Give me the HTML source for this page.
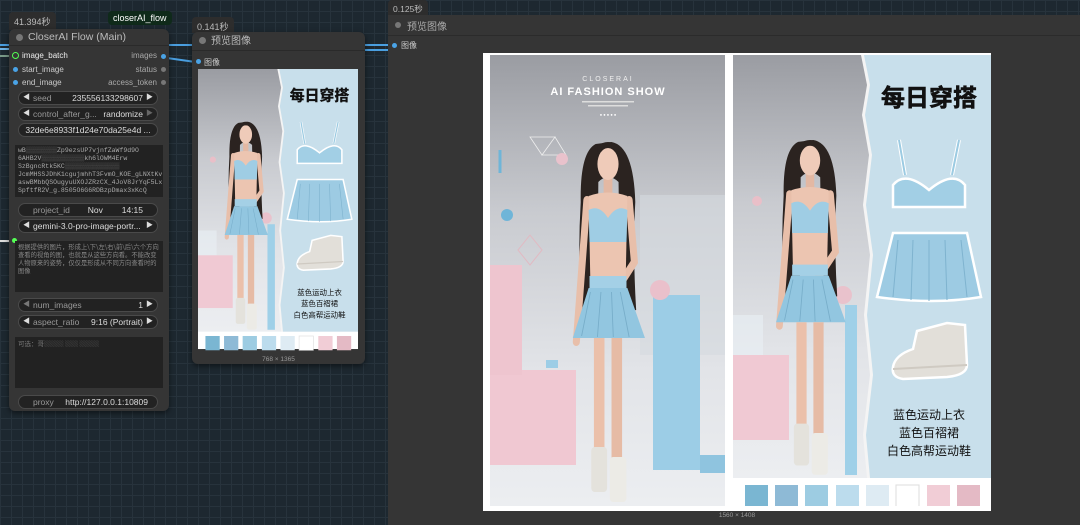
<!DOCTYPE html>
<html><head><meta charset="utf-8">
<style>
*{margin:0;padding:0;box-sizing:border-box}
body{width:1080px;height:525px;overflow:hidden;position:relative;font-family:"Liberation Sans","Noto Sans CJK SC",sans-serif;
background-color:#1d2830;
background-image:linear-gradient(#27333c 1px,transparent 1px),linear-gradient(90deg,#27333c 1px,transparent 1px);
background-size:11px 11px}
.abs{position:absolute}
.lbl{position:absolute;background:#2d2d2d;color:#bbb;font-size:9px;padding:3px 5px;border-radius:4px 4px 0 0}
.node{position:absolute;background:#353535;border-radius:6px;box-shadow:0 2px 6px rgba(0,0,0,.5)}
.tbar{height:17px;border-bottom:1px solid #2a2a2a;color:#bbb;font-size:10px;line-height:17px;padding-left:19px;position:relative}
.tbar:before{content:"";position:absolute;left:7px;top:5px;width:7px;height:7px;border-radius:50%;background:#777}
.row{position:absolute;font-size:8px;color:#ccc}
.dot{position:absolute;width:5px;height:5px;border-radius:50%;background:#4aa3e6}
.w{position:absolute;left:18px;width:140px;height:14px;background:#222;border:1px solid #4a4a4a;border-radius:7px;font-size:8.5px;color:#ddd;line-height:12px;white-space:nowrap;overflow:hidden}
.w .k{position:absolute;left:14px;color:#999}
.w .v{position:absolute;right:14px}
.w .al{position:absolute;left:4px;color:#ddd;font-size:7px}
.w .ar{position:absolute;right:4px;color:#ddd;font-size:7px}
.ta{position:absolute;left:15px;width:148px;background:#222;font-size:6.5px;color:#888;line-height:8px;padding:2px 3px;font-family:"Liberation Mono","Noto Sans CJK SC",monospace;overflow:hidden}
.wire{position:absolute;height:2px;background:#4a9fe0}
</style></head><body>

<div class="wire" style="left:0;top:44px;width:10px"></div>
<div class="wire" style="left:0;top:48px;width:10px;background:#6fb5e8"></div>
<div class="wire" style="left:167px;top:44px;width:26px"></div>
<div class="wire" style="left:167px;top:57px;width:26px;transform:rotate(8deg);transform-origin:left"></div>
<div class="wire" style="left:364px;top:44px;width:25px"></div>
<div class="wire" style="left:364px;top:49px;width:25px"></div>
<div class="abs" style="left:0;top:240px;width:14px;height:2px;background:#ddd"></div>
<div class="abs" style="left:0;top:55px;width:10px;height:2px;background:#7a9a88"></div>

<div class="lbl" style="left:9px;top:12px;height:18px">41.394秒</div>
<div class="abs" style="left:108px;top:11px;background:#0f2a1a;color:#fff;font-size:9px;padding:2px 5px;border-radius:4px">closerAI_flow</div>
<div class="node" style="left:9px;top:29px;width:160px;height:382px">
  <div class="tbar" style="font-size:10.5px">CloserAI Flow (Main)</div>
  <div class="abs" style="left:3px;top:23px;width:7px;height:7px;border:1.5px solid #5f5;border-radius:50%"></div>
  <div class="row" style="left:13px;top:22px;color:#eee">image_batch</div>
  <div class="dot" style="left:4px;top:38px"></div><div class="row" style="left:13px;top:36px">start_image</div>
  <div class="dot" style="left:4px;top:51px"></div><div class="row" style="left:13px;top:49px">end_image</div>
  <div class="row" style="right:12px;top:22px;color:#aaa">images</div><div class="dot" style="right:3px;top:25px"></div>
  <div class="row" style="right:12px;top:36px;color:#aaa">status</div><div class="dot" style="right:3px;top:38px;background:#777"></div>
  <div class="row" style="right:12px;top:49px;color:#aaa">access_token</div><div class="dot" style="right:3px;top:51px;background:#777"></div>
</div>
<div class="w" style="top:91px"><span class="al">◀</span><span class="k">seed</span><span class="v">235556133298607</span><span class="ar">▶</span></div>
<div class="w" style="top:107px"><span class="al">◀</span><span class="k">control_after_g...</span><span class="v">randomize</span><span class="ar" style="color:#666">▶</span></div>
<div class="w" style="top:123px;text-align:center">32de6e8933f1d24e70da25e4d ...</div>
<div class="ta" style="top:145px;height:52px;color:#aaa">wB<span style="color:#666">▒▒▒▒▒▒▒▒</span>Zp9ezsUP7vjnfZaWf9d9O<br>6AHB2V<span style="color:#666">▒▒▒▒▒▒▒▒▒▒▒</span>kh6lOWM4Erw<br>SzBgncRtk5KC<span style="color:#666">▒▒▒▒▒▒▒▒▒▒▒▒▒▒</span><br>JcmMHSSJDhK1cgujmhhT3FvmO_KOE_gLNXtKv<br>aswBMbbQSOugyuUXOJZRzCX_4JoV8JrYqF5Lx<br>SpftfR2V_g.8505O6G6RDBzpDmax3xKcQ</div>
<div class="w" style="top:203px"><span class="k">project_id</span><span class="v">Nov &nbsp;&nbsp;&nbsp;&nbsp;&nbsp;&nbsp;&nbsp;14:15</span></div>
<div class="w" style="top:219px"><span class="al">◀</span><span class="k" style="color:#ddd">gemini-3.0-pro-image-portr...</span><span class="ar">▶</span></div>
<div class="abs" style="left:12px;top:238px;width:5px;height:5px;border-radius:50%;background:#5f5"></div>
<div class="ta" style="top:241px;height:51px;font-family:'Noto Sans CJK SC',sans-serif;font-size:6.3px">根据提供的图片，形成上\下\左\右\前\后\六个方向查看的视角的图，也就是从这些方向看。不能改变人物原来的姿势，仅仅是形成从不同方向查看时的图像</div>
<div class="w" style="top:298px"><span class="al" style="color:#777">◀</span><span class="k">num_images</span><span class="v">1</span><span class="ar">▶</span></div>
<div class="w" style="top:315px"><span class="al">◀</span><span class="k">aspect_ratio</span><span class="v">9:16 (Portrait)</span><span class="ar">▶</span></div>
<div class="ta" style="top:337px;height:51px;font-family:'Noto Sans CJK SC',sans-serif;color:#777">可选：哥<span style="color:#555">▒▒▒ ▒▒ ▒▒▒</span></div>
<div class="w" style="top:395px"><span class="k">proxy</span><span class="v" style="right:9px">http://127.0.0.1:10809</span></div>

<svg width="0" height="0" style="position:absolute">
<defs>
<linearGradient id="bgL" x1="0" y1="0" x2="0" y2="1">
  <stop offset="0" stop-color="#9a9ca2"/><stop offset=".35" stop-color="#c9cbd0"/><stop offset=".7" stop-color="#e2e4e8"/><stop offset="1" stop-color="#eceef1"/>
</linearGradient>
<g id="fig">
  <path d="M-14 2 Q-32 10 -31 60 Q-35 120 -29 175 L-12 172 L-11 40 Q0 30 12 40 L14 172 L32 168 Q28 110 31 60 Q29 4 4 0 Z" fill="#2b2320"/>
  <path d="M-24 58 L-36 200" stroke="#e8bfaa" stroke-width="8" stroke-linecap="round"/>
  <path d="M24 58 L30 120 L8 150" stroke="#e8bfaa" stroke-width="8" stroke-linecap="round" fill="none"/>
  <rect x="-5" y="33" width="10" height="18" fill="#e3b8a3"/>
  <path d="M-22 54 Q0 47 22 54 L20 142 L-20 142 Z" fill="#ecc5b1"/>
  <ellipse cx="0" cy="22" rx="12" ry="16" fill="#efcbb9"/>
  <path d="M-12 10 Q0 2 12 10 L12 4 Q0 -4 -12 4Z" fill="#2b2320"/>
  <path d="M-22 68 Q-10 62 0 76 Q10 62 22 68 L21 100 L-21 100 Z" fill="#9fcde4"/>
  <rect x="-21" y="134" width="42" height="12" fill="#a4d0e6"/>
  <path d="M-22 146 L22 146 L42 196 L-40 196 Z" fill="#92c6e0"/>
  <path d="M-20 150 L-30 194 M-8 150 L-12 195 M4 150 L6 195 M14 150 L24 195" stroke="#77adc9" stroke-width="1"/>
  <rect x="-16" y="196" width="12" height="120" fill="#ebc0aa"/>
  <rect x="4" y="196" width="12" height="128" fill="#e6bba5"/>
  <rect x="-19" y="305" width="18" height="45" rx="4" fill="#e4e2dc"/>
  <rect x="2" y="315" width="19" height="45" rx="4" fill="#ecebe6"/>
</g>
<g id="card">
  <rect width="258" height="451" fill="#fff"/>
  <rect x="0" y="0" width="258" height="423" fill="url(#bgL)"/>
  <rect x="0" y="260" width="30" height="60" fill="#e9f0f5" opacity=".6"/>
  <rect x="0" y="300" width="56" height="85" fill="#f0c9d3"/>
  <rect x="112" y="250" width="12" height="170" fill="#9fd0e8"/>
  <circle cx="110" cy="240" r="9" fill="#e9c2cc"/>
  <circle cx="24" cy="146" r="5" fill="#e9bfc8"/>
  <use href="#fig" transform="translate(77 85) scale(0.85 0.93)"/>
  <path d="M128 0 L134 30 L129 60 L136 100 L130 150 L137 200 L131 260 L137 320 L130 380 L134 423 L258 423 L258 0 Z" fill="#f4f4f4"/>
  <path d="M131 0 L137 30 L132 60 L139 100 L133 150 L140 200 L134 260 L140 320 L133 380 L137 423 L258 423 L258 0 Z" fill="#c8dfeb"/>
  <text x="196" y="51" font-size="24" font-weight="bold" text-anchor="middle" fill="#111" stroke="#111" stroke-width="0.6" font-family="Noto Sans CJK SC,sans-serif">每日穿搭</text>
  <path d="M166 85 L172 120 M226 85 L219 120" stroke="#fff" stroke-width="4"/>
  <path d="M166 85 L172 120 M226 85 L219 120" stroke="#9ccbe2" stroke-width="2"/>
  <path d="M160 130 Q172 115 196 135 Q220 115 232 130 L232 152 L160 152 Z" fill="#a2cfe5" stroke="#fff" stroke-width="2.5"/>
  <path d="M160 178 L234 178 L248 242 Q200 250 144 242 Z" fill="#9dcbe3" stroke="#fff" stroke-width="2.5"/>
  <path d="M165 185 L160 242 M180 185 L178 245 M196 185 L196 246 M212 185 L214 245 M228 185 L234 242" stroke="#7fb3cf" stroke-width="1"/>
  <path d="M184 276 L214 268 L232 270 L234 310 Q234 320 214 322 L170 324 Q158 322 160 312 Q162 300 180 294 Z" fill="#e2dfd9" stroke="#fff" stroke-width="2.5"/>
  <path d="M160 314 L234 310" stroke="#cfcac2" stroke-width="2"/>
  <text x="196" y="364" font-size="12" text-anchor="middle" fill="#111" font-family="Noto Sans CJK SC,sans-serif">蓝色运动上衣</text>
  <text x="196" y="382" font-size="12" text-anchor="middle" fill="#111" font-family="Noto Sans CJK SC,sans-serif">蓝色百褶裙</text>
  <text x="196" y="400" font-size="12" text-anchor="middle" fill="#111" font-family="Noto Sans CJK SC,sans-serif">白色高帮运动鞋</text>
  <rect x="12" y="430" width="23" height="23" fill="#7ab6d2"/>
  <rect x="42" y="430" width="23" height="23" fill="#8ebad6"/>
  <rect x="72" y="430" width="23" height="23" fill="#9dcce2"/>
  <rect x="103" y="430" width="23" height="23" fill="#bcdced"/>
  <rect x="133" y="430" width="23" height="23" fill="#deebf3"/>
  <rect x="163" y="430" width="23" height="23" fill="#fff" stroke="#ddd"/>
  <rect x="194" y="430" width="23" height="23" fill="#f1cdd6"/>
  <rect x="224" y="430" width="23" height="23" fill="#e4bac5"/>
</g>
</defs>
</svg>

<div class="lbl" style="left:192px;top:17px;height:16px">0.141秒</div>
<div class="node" style="left:192px;top:32px;width:173px;height:332px">
  <div class="tbar" style="height:19px;line-height:19px">预览图像</div>
  <div class="dot" style="left:4px;top:27px"></div><div class="row" style="left:12px;top:25px;font-family:'Noto Sans CJK SC'">图像</div>
  <div class="abs" style="left:0;top:324px;width:173px;text-align:center;font-size:6.5px;color:#999">768 × 1365</div>
</div>
<svg class="abs" style="left:198px;top:69px" width="160" height="285" viewBox="0 0 258 459" preserveAspectRatio="none"><use href="#card"/></svg>

<div class="lbl" style="left:388px;top:0;height:16px;font-size:8.5px">0.125秒</div>
<div class="abs" style="left:388px;top:15px;width:692px;height:510px;background:#353535"></div>
<div class="abs" style="left:388px;top:15px;width:692px;height:21px;border-bottom:1px solid #2b2b2b;color:#aaa;font-size:10px;line-height:21px;padding-left:19px;font-family:'Noto Sans CJK SC'"><span class="abs" style="left:7px;top:7px;width:6px;height:6px;border-radius:50%;background:#777"></span>预览图像</div>
<div class="dot" style="left:392px;top:43px"></div><div class="row" style="left:401px;top:40px;font-family:'Noto Sans CJK SC'">图像</div>
<div class="abs" style="left:483px;top:53px;width:508px;height:458px;background:#fff"></div>
<svg class="abs" style="left:490px;top:55px" width="235" height="451">
  <rect width="235" height="451" fill="url(#bgL)"/>
  <rect x="150" y="140" width="85" height="160" fill="#d6dadf" opacity=".6"/>
  <text x="118" y="26" font-size="7" letter-spacing="2" fill="#eee" text-anchor="middle">CLOSERAI</text>
  <text x="118" y="40" font-size="11" font-weight="bold" letter-spacing="1" fill="#fff" text-anchor="middle">AI FASHION SHOW</text>
  <rect x="92" y="46" width="52" height="1.5" fill="#ddd"/><rect x="98" y="50" width="40" height="1.5" fill="#ddd"/>
  <text x="118" y="61" font-size="4" fill="#fff" text-anchor="middle">● ● ● ● ●</text>
  <path d="M40 82 L65 82 L52 100 Z M52 100 L65 82 L76 100 Z" stroke="#eee" fill="none" stroke-width="0.8"/>
  <circle cx="72" cy="104" r="6" fill="#e9c2cc"/><circle cx="17" cy="160" r="6" fill="#6fb5d8"/>
  <path d="M10 95 L10 118" stroke="#6fb5d8" stroke-width="3"/>
  <path d="M40 180 L52 195 L40 210 L28 195 Z" stroke="#e2b9c2" fill="none"/>
  <rect x="0" y="315" width="86" height="95" fill="#f0c8d2"/><rect x="0" y="210" width="32" height="110" fill="#eec5cf"/>
  <rect x="163" y="240" width="47" height="175" fill="#9ccde6"/>
  <circle cx="170" cy="235" r="10" fill="#eac0cb"/>
  <rect x="56" y="305" width="12" height="8" fill="#9ccde6"/>
  <rect x="210" y="400" width="25" height="18" fill="#8fc4df"/>
  <use href="#fig" transform="translate(118 87) scale(0.88 1)"/>
</svg>
<svg class="abs" style="left:733px;top:55px" width="258" height="451"><use href="#card"/></svg>
<div class="abs" style="left:483px;top:512px;width:508px;text-align:center;font-size:6.5px;color:#999">1560 × 1408</div>
</body></html>
